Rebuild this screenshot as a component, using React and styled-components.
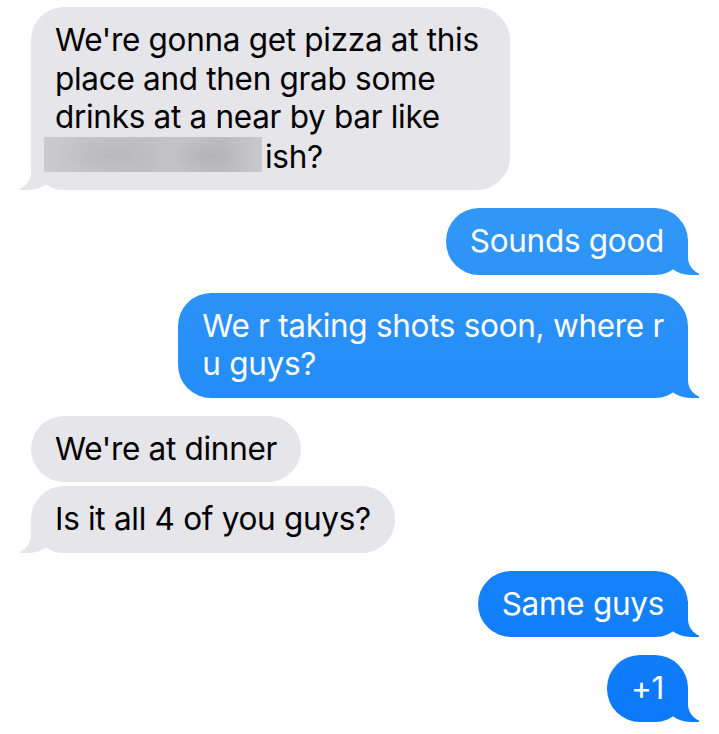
import React from "react";
import styled, { createGlobalStyle, css } from "styled-components";

const GlobalStyle = createGlobalStyle`
  html, body {
    margin: 0;
    padding: 0;
    background: #ffffff;
  }
`;

const blueFill = css`
  background-image: linear-gradient(to bottom, #3ea5f6 0px, #3298f7 200px, #0a78fa 734px);
  background-attachment: fixed;
`;

const Thread = styled.div`
  width: 719px;
  box-sizing: border-box;
  padding: 7px 31px 0 31px;
  display: flex;
  flex-direction: column;
  font-family: Inter, "Liberation Sans", sans-serif;
  font-size: 31.5px;
  letter-spacing: -0.3px;
  line-height: 38.5px;
`;

const Bubble = styled.div`
  position: relative;
  width: fit-content;
  min-width: ${(p) => p.$minWidth || 0}px;
  box-sizing: border-box;
  padding: 14px 24px;
  border-radius: 33px;
  margin-top: ${(p) => (p.$grouped ? "4px" : "18px")};
  &:first-child {
    margin-top: 0;
  }

  ${(p) =>
    p.$side === "me"
      ? css`
          align-self: flex-end;
          color: #ffffff;
          ${blueFill}
        `
      : css`
          align-self: flex-start;
          color: #000000;
          background: #e5e5ea;
        `}

  ${(p) =>
    p.$tail &&
    (p.$side === "me"
      ? css`
          &::before {
            content: "";
            position: absolute;
            bottom: 0;
            right: -11px;
            width: 36px;
            height: 36px;
            border-bottom-left-radius: 28px 24px;
            ${blueFill}
          }
          &::after {
            content: "";
            position: absolute;
            bottom: 0;
            right: -46px;
            width: 46px;
            height: 42px;
            background: #ffffff;
            border-bottom-left-radius: 18px;
          }
        `
      : css`
          &::before {
            content: "";
            position: absolute;
            bottom: 0;
            left: -11px;
            width: 36px;
            height: 36px;
            border-bottom-right-radius: 28px 24px;
            background: #e5e5ea;
          }
          &::after {
            content: "";
            position: absolute;
            bottom: 0;
            left: -46px;
            width: 46px;
            height: 42px;
            background: #ffffff;
            border-bottom-right-radius: 18px;
          }
        `)}
`;

const Text = styled.span`
  position: relative;
  z-index: 1;
  white-space: nowrap;
`;

const Redacted = styled.span`
  display: inline-block;
  vertical-align: -4px;
  width: 218px;
  height: 35px;
  margin-left: -11px;
  margin-right: 3px;
  background:
    radial-gradient(ellipse 40px 18px at 75% 55%, rgba(170, 170, 172, 0.5), transparent),
    radial-gradient(ellipse 50px 18px at 30% 50%, rgba(175, 175, 177, 0.45), transparent),
    linear-gradient(90deg, #cbcbcd 0%, #c3c3c5 20%, #bfbfc1 45%, #c4c4c6 60%, #bcbcbe 82%, #c9c9cb 100%);
`;

const messages = [
  {
    side: "them",
    tail: true,
    minWidth: 479,
    lines: [
      "We're gonna get pizza at this",
      "place and then grab some",
      "drinks at a near by bar like",
      "__REDACTED__",
    ],
  },
  { side: "me", tail: true, lines: ["Sounds good"] },
  { side: "me", tail: true, lines: ["We r taking shots soon, where r", "u guys?"] },
  { side: "them", tail: false, lines: ["We're at dinner"] },
  { side: "them", tail: true, grouped: true, lines: ["Is it all 4 of you guys?"] },
  { side: "me", tail: true, lines: ["Same guys"] },
  { side: "me", tail: true, lines: ["+1"] },
];

const App = () => {
  return (
    <>
      <GlobalStyle />
      <Thread>
        {messages.map((m, i) => (
          <Bubble
            key={i}
            $side={m.side}
            $tail={m.tail}
            $grouped={m.grouped}
            $minWidth={m.minWidth}
          >
            <Text>
              {m.lines.map((line, j) => (
                <React.Fragment key={j}>
                  {j > 0 && <br />}
                  {line === "__REDACTED__" ? (
                    <>
                      <Redacted />
                      ish?
                    </>
                  ) : (
                    line
                  )}
                </React.Fragment>
              ))}
            </Text>
          </Bubble>
        ))}
      </Thread>
    </>
  );
};

export default App;
